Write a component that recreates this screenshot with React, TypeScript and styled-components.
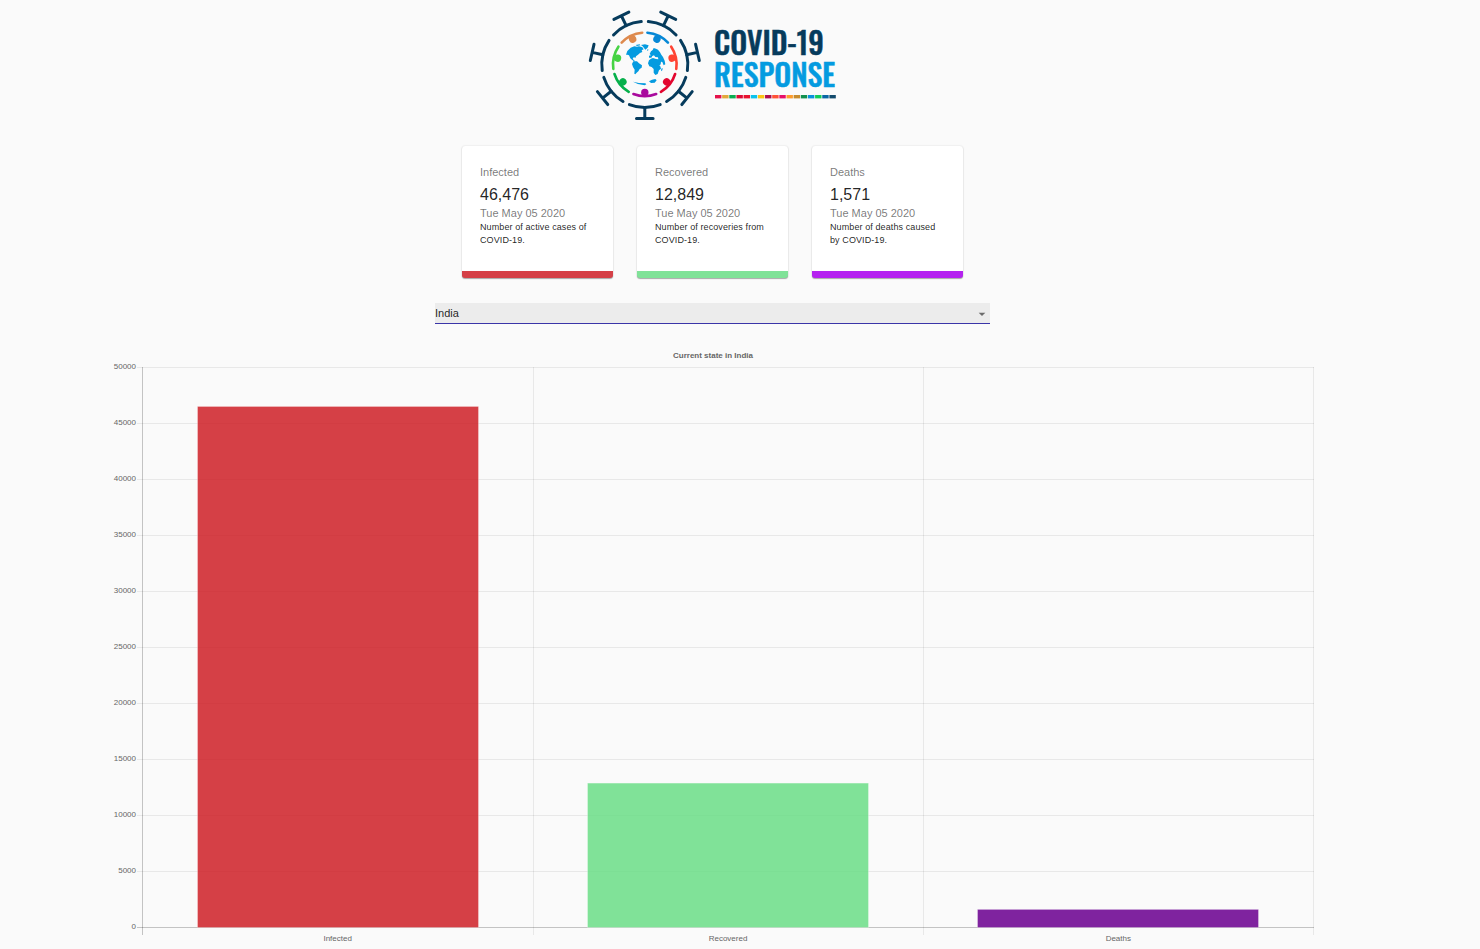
import React, { useState } from "react";
import styled, { createGlobalStyle } from "styled-components";

const GlobalStyle = createGlobalStyle`
  *, *::before, *::after { box-sizing: border-box; }
  body {
    margin: 0;
    background: #fafafa;
    color: rgba(0, 0, 0, 0.87);
    font-family: "Liberation Sans", Arial, sans-serif;
  }
`;

const Page = styled.main`
  display: flex;
  flex-direction: column;
  align-items: center;
  padding: 10px 55px 0 0;
`;

const LogoArt = styled.svg`
  display: block;
  width: 249px;
  height: 111px;
  overflow: visible;
`;

const LogoText = styled.text`
  font-family: "Oswald", "Roboto Condensed", "Open Sans Condensed", "Liberation Sans Narrow", "Liberation Sans", sans-serif;
  font-size: 30px;
  font-weight: 500;
  stroke-width: 0.5px;
`;

const Cards = styled.section`
  display: flex;
  flex-wrap: wrap;
  justify-content: center;
  gap: 24px;
  margin-top: 25px;
`;

const Card = styled.article<{ $accent: string }>`
  width: 151px;
  min-height: 132px;
  padding: 19px 18px 24px;
  background: #fff;
  border-bottom: 7px solid ${(p) => p.$accent};
  border-radius: 3px;
  box-shadow: 0 1px 1px rgba(0, 0, 0, 0.3), 0 0 2px rgba(0, 0, 0, 0.14);
`;

const Caption = styled.p`
  margin: 0;
  color: rgba(0, 0, 0, 0.54);
  font-size: 11px;
  line-height: 15px;
`;

const Figure = styled.h2`
  margin: 3px 0 0;
  font-size: 16px;
  font-weight: 400;
  line-height: 23px;
`;

const Note = styled.p`
  margin: 0;
  font-size: 9px;
  letter-spacing: 0.01071em;
  line-height: 13px;
`;

const Picker = styled.div`
  display: grid;
  align-items: center;
  width: 100%;
  max-width: 555px;
  margin-top: 25px;
`;

const Select = styled.select`
  grid-area: 1 / 1;
  width: 100%;
  height: 21px;
  padding: 0 16px 0 0;
  appearance: none;
  border: 0;
  border-bottom: 1px solid #3a35a8;
  border-radius: 0;
  outline: 0;
  background: #ececec;
  color: rgba(0, 0, 0, 0.87);
  font: 11px "Liberation Sans", Arial, sans-serif;
`;

const Arrow = styled.svg`
  grid-area: 1 / 1;
  justify-self: end;
  width: 16px;
  height: 16px;
  fill: rgba(0, 0, 0, 0.54);
  pointer-events: none;
`;

const ChartArea = styled.section`
  width: 100%;
  margin-top: 21px;
  padding: 0 107px;
`;

const ChartArt = styled.svg`
  display: block;
  width: 100%;
  font: 8px "Liberation Sans", Arial, sans-serif;
  fill: #666;
`;

const ChartTitle = styled.text`
  font-weight: 700;
  text-anchor: middle;
`;

const CENTRE = { x: 56.8, y: 54.4 };
const PEOPLE = ["#a90a9d", "#06b04b", "#46d344", "#de8a4e", "#0788d6", "#ff4433", "#e3062f"];
const STRIPES = [
  "#e5124b", "#e3a83b", "#0bac50", "#dd0a35", "#e8132f", "#0bc2ec", "#fcc412", "#b00d4c", "#ff5136",
  "#e60d68", "#fd9c2b", "#c78c2e", "#11914f", "#0b92dc", "#10cc58", "#0867a4", "#124a6c",
];

function arc(radius: number, half: number) {
  const a = (half * Math.PI) / 180;
  const x = radius * Math.sin(a);
  const y = radius * Math.cos(a);
  return `M${-x} ${y}A${radius} ${radius} 0 0 0 ${x} ${y}`;
}

function Logo() {
  return (
    <LogoArt viewBox="0 0 249 111" role="img" aria-label="COVID-19 Response">
      <g transform={`translate(${CENTRE.x} ${CENTRE.y})`} fill="none" strokeLinecap="round">
        {PEOPLE.map((color, i) => (
          <g key={color} transform={`rotate(${(i * 360) / 7})`}>
            <path d={arc(43, 21)} stroke="#063b5c" strokeWidth="3" />
            <path d="M0 43V54M-8.3 54H8.3" stroke="#063b5c" strokeWidth="3" />
            <path d={arc(31.8, 21)} stroke={color} strokeWidth="2.6" />
            <circle cx="0" cy="28" r="3.7" fill={color} />
          </g>
        ))}
      </g>
      {/* Continents, in a coordinate space three times the logo's */}
      <g transform="translate(27 24) scale(0.3333)" fill="#049be0">
        <path d="M33 62L37 51L47 41L58 37L66 38L72 37L82 40L86 46L80 49L82 54L75 57L69 62L63 67L62 71L56 70L53 74L57 79L61 82L57 82L51 77L46 73L42 64L37 62Z" />
        <path d="M62 33L74 31L76 34L66 36ZM78 33L90 31L101 34L98 41L91 47L87 42L83 37Z" />
        <path d="M55 82L66 82L72 88L81 94L80 101L74 105L70 112L65 116L61 121L58 119L59 107L54 99L51 90Z" />
        <path d="M104 60L108 52L113 48L116 42L123 44L129 47L135 55L139 62L144 69L149 80L151 91L146 94L142 84L138 83L137 91L133 95L136 97L138 104L132 109L128 120L121 123L116 116L116 105L110 99L103 97L99 88L102 79L108 74L114 72L123 75L130 76L129 70L121 69L117 64L112 66L109 71L102 71L102 65L108 64Z" />
        <path d="M139 104L143 102L142 109L138 112ZM96 47L100 46L100 49L96 50Z" />
        <path d="M54 143Q71 148 91 148L94 151L89 154Q70 153 54 143ZM102 142L111 137L121 135L125 139L119 146L108 147Z" />
      </g>
      <LogoText x="126" y="45" fill="#063b5c" stroke="#063b5c">COVID-19</LogoText>
      <LogoText x="126" y="77" fill="#049be0" stroke="#049be0">RESPONSE</LogoText>
      {STRIPES.map((color, i) => (
        <rect key={color} x={127 + i * 7.15} y="85" width="6.4" height="3.4" fill={color} />
      ))}
    </LogoArt>
  );
}

const STATS = [
  { label: "Infected", value: 46476, note: "Number of active cases of COVID-19.", accent: "#d54047", bar: "rgba(204, 18, 25, 0.8)" },
  { label: "Recovered", value: 12849, note: "Number of recoveries from COVID-19.", accent: "#80e298", bar: "rgba(98, 220, 128, 0.8)" },
  { label: "Deaths", value: 1571, note: "Number of deaths caused by COVID-19.", accent: "#b522f0", bar: "rgba(113, 11, 149, 0.9)" },
];

const PLOT = { left: 36, right: 1207, top: 22, bottom: 582, max: 50000 };
const TICKS = Array.from({ length: 11 }, (_, i) => i * 5000);
const yOf = (value: number) => PLOT.bottom - (value / PLOT.max) * (PLOT.bottom - PLOT.top);

function Chart({ country }: { country: string }) {
  const slot = (PLOT.right - PLOT.left) / STATS.length;
  return (
    <ChartArt viewBox="0 0 1211 604" role="img" aria-label={`Current state in ${country}`}>
      <ChartTitle x="606" y="13">Current state in {country}</ChartTitle>
      {TICKS.map((tick) => {
        const y = Math.round(yOf(tick)) + 0.5;
        return (
          <g key={tick}>
            <path d={`M30 ${y}H${PLOT.right}`} stroke={tick ? "rgba(0,0,0,0.07)" : "rgba(0,0,0,0.22)"} />
            <text x="29" y={y + 1.5} textAnchor="end">{tick}</text>
          </g>
        );
      })}
      {[0, 1, 2, 3].map((i) => (
        <path
          key={i}
          d={`M${Math.ceil(PLOT.left + i * slot) - 0.5} ${PLOT.top}V${PLOT.bottom + 8}`}
          stroke={i ? "rgba(0,0,0,0.07)" : "rgba(0,0,0,0.22)"}
        />
      ))}
      {STATS.map((stat, i) => {
        const x = Math.floor(PLOT.left + i * slot) + 54.5;
        const y = yOf(stat.value);
        return (
          <g key={stat.label}>
            <rect x={x} y={y} width="281" height={PLOT.bottom + 0.5 - y} fill={stat.bar} stroke="rgba(255,255,255,0.3)" />
            <text x={PLOT.left - 0.5 + (i + 0.5) * slot} y="596" textAnchor="middle">{stat.label}</text>
          </g>
        );
      })}
    </ChartArt>
  );
}

export default function App() {
  const [country, setCountry] = useState("India");
  return (
    <>
      <GlobalStyle />
      <Page>
        <Logo />
        <Cards>
          {STATS.map((stat) => (
            <Card key={stat.label} $accent={stat.accent}>
              <Caption>{stat.label}</Caption>
              <Figure>{stat.value.toLocaleString("en-US")}</Figure>
              <Caption>Tue May 05 2020</Caption>
              <Note>{stat.note}</Note>
            </Card>
          ))}
        </Cards>
        <Picker>
          <Select aria-label="Country" value={country} onChange={(e) => setCountry(e.target.value)}>
            <option>India</option>
          </Select>
          <Arrow viewBox="0 0 24 24" aria-hidden="true">
            <path d="M7 10l5 5 5-5z" />
          </Arrow>
        </Picker>
        <ChartArea>
          <Chart country={country} />
        </ChartArea>
      </Page>
    </>
  );
}
